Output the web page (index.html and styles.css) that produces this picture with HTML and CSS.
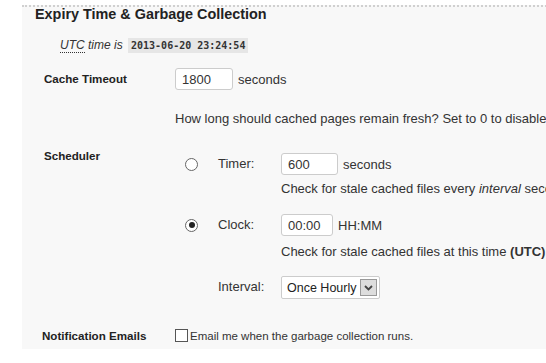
FILE: index.html
```html
<!DOCTYPE html>
<html lang="en">
<head>
    <meta charset="UTF-8">
    <meta name="viewport" content="width=device-width, initial-scale=1.0">
    <title>Expiry Time &amp; Garbage Collection</title>
    <link rel="stylesheet" href="styles.css">
</head>
<body>
    <div class="panel">
        <h3 class="title">Expiry Time &amp; Garbage Collection</h3>
        <p class="utc"><abbr title="Coordinated Universal Time">UTC</abbr> time is <code>2013-06-20 23:24:54</code></p>

        <div class="row row-cache">
            <div class="label">Cache Timeout</div>
            <div class="field">
                <div class="line">
                    <input type="text" class="num w-cache" value="1800"> seconds
                </div>
                <p class="desc desc-cache">How long should cached pages remain fresh? Set to 0 to disable garbage collection.</p>
            </div>
        </div>

        <div class="row row-sched">
            <div class="label">Scheduler</div>
            <div class="sched">
                <div class="opt opt-timer">
                    <span class="radio-cell"><input type="radio" name="sched"></span>
                    <span class="opt-name">Timer:</span>
                    <div class="opt-field">
                        <div class="line"><input type="text" class="num w-timer" value="600"> seconds</div>
                        <p class="desc">Check for stale cached files every <em>interval</em> seconds.</p>
                    </div>
                </div>
                <div class="opt opt-clock">
                    <span class="radio-cell"><input type="radio" name="sched" checked></span>
                    <span class="opt-name">Clock:</span>
                    <div class="opt-field">
                        <div class="line"><input type="text" class="num w-clock" value="00:00"> HH:MM</div>
                        <p class="desc">Check for stale cached files at this time <strong>(UTC)</strong> or starting at this time every <em>interval</em> below.</p>
                    </div>
                </div>
                <div class="opt opt-interval">
                    <span class="radio-cell"></span>
                    <span class="opt-name">Interval:</span>
                    <div class="opt-field">
                        <div class="select">
                            <span>Once Hourly</span>
                            <span class="arrow">
                                <svg width="9" height="6" viewBox="0 0 9 6"><path d="M1 1 L4.5 4.5 L8 1" fill="none" stroke="#444" stroke-width="1.8"/></svg>
                            </span>
                        </div>
                    </div>
                </div>
            </div>
        </div>

        <div class="row row-mail">
            <div class="label">Notification Emails</div>
            <div class="field">
                <label class="check"><input type="checkbox"> Email me when the garbage collection runs.</label>
            </div>
        </div>
    </div>
</body>
</html>
```

FILE: styles.css
```css
html, body {
    overflow: hidden;
}
body {
    margin: 0;
    background-color: #fff;
    font-family: "Liberation Sans", Arial, sans-serif;
    font-size: 13px;
    color: #333;
}
.panel {
    margin: 5px 0 0 22px;
    width: 760px;
    height: 344px;
    box-sizing: border-box;
    background-color: #f8f8f8;
    border-top: 2px dotted #d0d0d0;
    padding: 0 0 0 22px;
}
.title {
    margin: -2px 0 0 -9px;
    font-size: 14.4px;
    line-height: 18px;
    color: #222;
}
.utc {
    margin: 15px 0 0 16px;
    font-style: italic;
    font-size: 12px;
    line-height: 15px;
}
abbr {
    text-decoration: none;
    border-bottom: 1px dotted #333;
}
code {
    font-family: "DejaVu Sans Mono", "Liberation Mono", monospace;
    font-style: normal;
    font-weight: bold;
    font-size: 10px;
    background-color: #e6e6e6;
    padding: 2px 3px;
    margin-left: 2px;
}
.row {
    display: grid;
    grid-template-columns: 131px 1fr;
}
.label {
    font-weight: bold;
    font-size: 11.6px;
    color: #222;
    padding-top: 2px;
}
.row-cache {
    margin-top: 15px;
}
.row-cache .label {
    padding-top: 4px;
}
.line {
    display: flex;
    align-items: center;
    gap: 5px;
    height: 22px;
}
input.num {
    height: 22px;
    box-sizing: border-box;
    border: 1px solid #ccc;
    border-radius: 3px;
    background: #fff;
    font: 13px "Liberation Sans", Arial, sans-serif;
    color: #333;
    padding: 0 6px;
    margin: 0;
}
.w-cache { width: 58px; }
.w-timer { width: 57px; }
.w-clock { width: 52px; }
.desc {
    margin: 0;
    white-space: nowrap;
    line-height: 15px;
}
.desc-cache {
    margin-top: 21px;
}
.row-sched {
    margin-top: 21px;
}
.sched {
    padding-top: 6px;
}
.opt {
    display: grid;
    grid-template-columns: 43px 63px 1fr;
}
.opt-clock {
    margin-top: 18px;
}
.opt-interval {
    margin-top: 17px;
}
.radio-cell {
    height: 22px;
    display: flex;
    align-items: center;
    padding-left: 10px;
}
.opt-name {
    line-height: 22px;
}
.opt-field .desc {
    margin-top: 6px;
}
.opt-clock .desc {
    margin-top: 8px;
}
input[type="radio"] {
    appearance: none;
    -webkit-appearance: none;
    width: 13px;
    height: 13px;
    margin: 0;
    border: 1px solid #666;
    border-radius: 50%;
    background: #fff;
    box-sizing: border-box;
    position: relative;
}
input[type="radio"]:checked::after {
    content: "";
    position: absolute;
    left: 2.5px;
    top: 2.5px;
    width: 6px;
    height: 6px;
    border-radius: 50%;
    background: #222;
}
.select {
    display: inline-flex;
    align-items: center;
    justify-content: space-between;
    width: 99px;
    height: 23px;
    box-sizing: border-box;
    border: 1px solid #ccc;
    border-radius: 2px;
    background: #fff;
    padding: 0 2px 0 5px;
    color: #222;
    font-size: 12.5px;
}
.arrow {
    width: 17px;
    height: 17px;
    box-sizing: border-box;
    border: 1px solid #999;
    background: #ddd;
    display: flex;
    align-items: center;
    justify-content: center;
}
.row-mail {
    margin-top: 30px;
}
.row-mail .label {
    margin-left: -2px;
    padding-top: 0;
}
.check {
    display: flex;
    align-items: center;
    gap: 2px;
    font-size: 11.5px;
}
input[type="checkbox"] {
    appearance: none;
    -webkit-appearance: none;
    width: 13px;
    height: 13px;
    margin: 0;
    border: 1px solid #555;
    background: #fff;
}
```
